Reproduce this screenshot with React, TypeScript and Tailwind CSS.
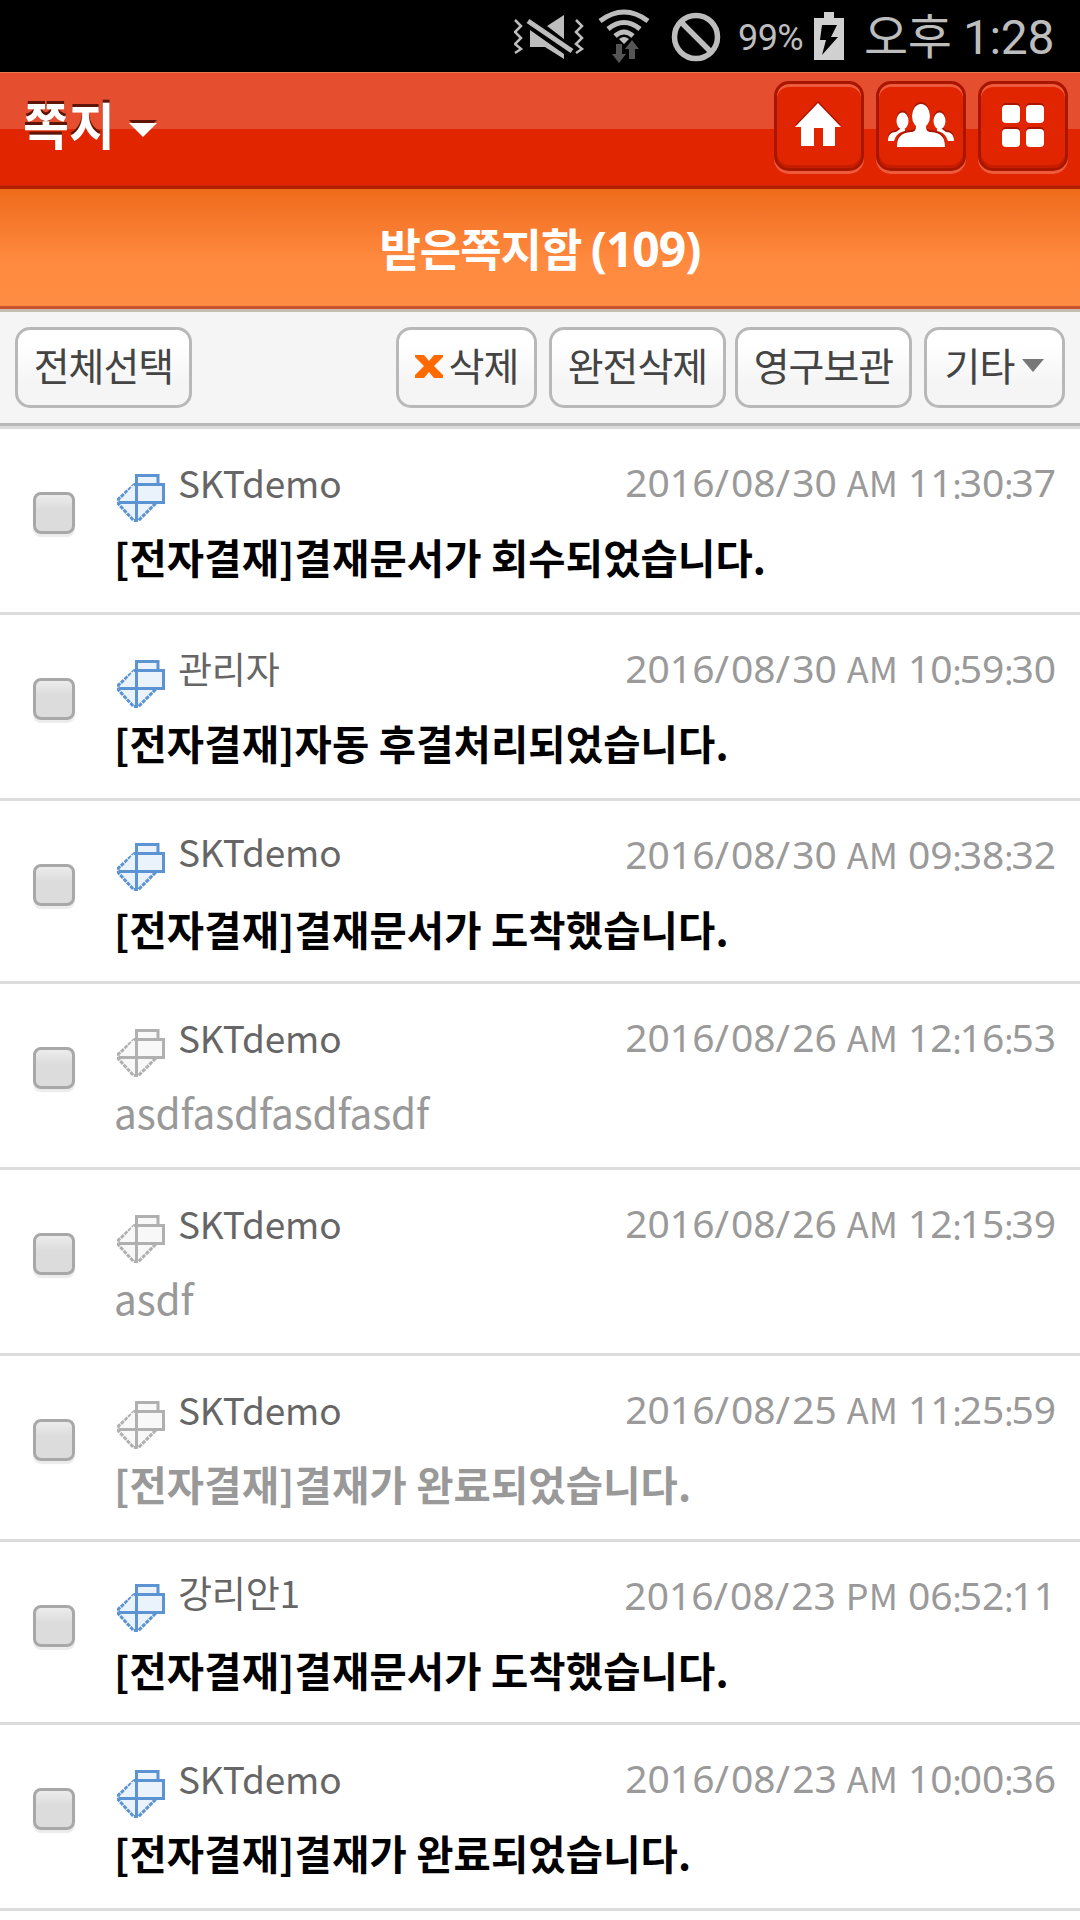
import React from 'react';

const messages = [
  { id: 1, from: 'SKTdemo', date: '2016/08/30', half: 'AM', time: '11:30:37', text: '[전자결재]결재문서가 회수되었습니다.', unread: true },
  { id: 2, from: '관리자', date: '2016/08/30', half: 'AM', time: '10:59:30', text: '[전자결재]자동 후결처리되었습니다.', unread: true },
  { id: 3, from: 'SKTdemo', date: '2016/08/30', half: 'AM', time: '09:38:32', text: '[전자결재]결재문서가 도착했습니다.', unread: true, short: true },
  { id: 4, from: 'SKTdemo', date: '2016/08/26', half: 'AM', time: '12:16:53', text: 'asdfasdfasdfasdf' },
  { id: 5, from: 'SKTdemo', date: '2016/08/26', half: 'AM', time: '12:15:39', text: 'asdf' },
  { id: 6, from: 'SKTdemo', date: '2016/08/25', half: 'AM', time: '11:25:59', text: '[전자결재]결재가 완료되었습니다.' },
  { id: 7, from: '강리안1', date: '2016/08/23', half: 'PM', time: '06:52:11', text: '[전자결재]결재문서가 도착했습니다.', unread: true, short: true },
  { id: 8, from: 'SKTdemo', date: '2016/08/23', half: 'AM', time: '10:00:36', text: '[전자결재]결재가 완료되었습니다.', unread: true },
];

function StatusBar() {
  return (
    <div className="h-[72px] bg-black flex items-center text-[#bdbdbd]">
      <svg className="ml-[514px] shrink-0" width="212" height="72" viewBox="514 0 212 72" fill="none">
        <g fill="#bdbdbd">
          <path d="M547 26 L564 15 V39z" />
          <path d="M530 30 L564 54 V59 L545 47 H530z" />
        </g>
        <path d="M528 21 L572 51" stroke="#bdbdbd" strokeWidth="5" />
        <path d="M515 20l6 6-6 6 6 6-6 6 6 5-6 4M576 20l6 6-6 6 6 6-6 6 6 5-6 4" stroke="#bdbdbd" strokeWidth="2.5" />
        <path d="M600 21 Q624 3 648 21M608 29 Q624 16 640 29M615 36 Q624 28 633 36" stroke="#bdbdbd" strokeWidth="5" />
        <path d="M619 39 Q624 35 629 39 L624 44z" fill="#bdbdbd" />
        <path d="M616 44h6v10h4l-7 9-7-9h4zM629 59v-10h-4l7-9 7 9h-4v10z" fill="#555" />
        <circle cx="696" cy="37" r="21.5" stroke="#bdbdbd" strokeWidth="5.5" />
        <path d="M681 22 L711 52" stroke="#bdbdbd" strokeWidth="5.5" />
      </svg>
      <span className="ml-3 mt-[4px] w-[67px] font-['Roboto'] text-[36px] tracking-[-0.6px] whitespace-nowrap">99%</span>
      <svg className="ml-2 shrink-0" width="32" height="48" viewBox="0 0 32 48">
        <path d="M11 0h10v6h10v42H1V6h10z" fill="#d0d0d0" />
        <path d="M9 13h15l-6 12h7L9 43l4-15H7z" fill="#000" />
      </svg>
      <span className="ml-[19px] mt-[3px] font-['Roboto','Noto_Sans_CJK_KR',sans-serif] text-[48px] leading-[60px] tracking-[-0.4px] whitespace-nowrap">오후 1:28</span>
    </div>
  );
}

function HeaderButton({ children }: { children: React.ReactNode }) {
  return (
    <button className="w-[90px] h-[90px] rounded-[15px] border-[3px] border-[#a81600] bg-[#e02500] shadow-[0_3px_0_#ee5a3c,inset_0_3px_0_#ee5a3c,inset_0_-3px_0_#c41d00] flex items-center justify-center">
      {children}
    </button>
  );
}

function Header() {
  return (
    <header className="h-[117px] flex items-start justify-between pl-[23px] pr-3 pt-[9px] bg-[linear-gradient(#e87a4c_0_1px,#e64e30_1px_57px,#e02500_57px_113px,#b32000_114px_117px)]">
      <div className="flex items-center mt-[7px] [filter:drop-shadow(0_-3px_0_#5c1508)]">
        <h1 className="text-white font-bold text-[50px] leading-[70px] font-['Noto_Sans_CJK_KR',sans-serif]">쪽지</h1>
        <svg className="ml-[14px] mt-[14px]" width="28" height="14" viewBox="0 0 28 14">
          <path d="M0 0h28L14 14z" fill="#fff" />
        </svg>
      </div>
      <div className="flex gap-3">
        <HeaderButton>
          <svg className="-mt-[2px] -ml-[3px] drop-shadow-[0_-2px_0_#a81600]" width="46" height="44" viewBox="0 0 46 44">
            <path d="M23 0 L46 24 H40 V43 H28 V25 H19 V43 H6 V24 H0z" fill="#fff" />
          </svg>
        </HeaderButton>
        <HeaderButton>
          <svg className="drop-shadow-[0_-2px_0_#a81600]" width="66" height="44" viewBox="0 0 66 44" fill="#fff">
            <ellipse cx="14.5" cy="17" rx="6" ry="8.5" />
            <ellipse cx="51.5" cy="17" rx="6" ry="8.5" />
            <path d="M0 37c0-6 3-9 8-9l4-3h5v2c-6 1-9 4-11 10zM66 37c0-6-3-9-8-9l-4-3h-5v2c6 1 9 4 11 10z" />
            <ellipse cx="33" cy="12" rx="9" ry="12" />
            <path d="M9 43c0-10 4-14 14-15 4 0 5-2 5-7h10c0 5 1 7 5 7 10 1 14 5 14 15z" />
          </svg>
        </HeaderButton>
        <HeaderButton>
          <div className="grid grid-cols-2 gap-[6px]">
            <i className="w-[18px] h-[18px] rounded bg-white shadow-[0_-2px_0_#a81600]" />
            <i className="w-[18px] h-[18px] rounded bg-white shadow-[0_-2px_0_#a81600]" />
            <i className="w-[18px] h-[18px] rounded bg-white shadow-[0_-2px_0_#a81600]" />
            <i className="w-[18px] h-[18px] rounded bg-white shadow-[0_-2px_0_#a81600]" />
          </div>
        </HeaderButton>
      </div>
    </header>
  );
}

function ToolButton({ wide, children }: { wide?: boolean; children: React.ReactNode }) {
  return (
    <button
      className={`${wide ? 'w-[177px]' : 'w-[141px]'} h-[81px] pb-[7px] rounded-[15px] border-[3px] border-[#b8b8b8] bg-linear-to-b from-white from-20% to-[#f5f5f5] to-70% flex items-center justify-center text-[#444] text-[39px] tracking-[-1px] whitespace-nowrap`}
    >
      {children}
    </button>
  );
}

function Toolbar() {
  return (
    <div className="h-[117px] mb-[3px] flex items-start pt-[15px] px-[15px] bg-[#f5f5f5] border-t-[3px] border-t-[#c5bdae] border-b-[3px] border-b-[#b8b8b8] shadow-[0_3px_0_#dcdcdc]">
      <ToolButton wide>전체선택</ToolButton>
      <div className="flex ml-auto">
        <ToolButton>
          <svg className="mr-[6px] mt-[5px]" width="28" height="23" viewBox="0 0 28 23">
            <path d="M0 0h9l5 6 5-6h9v2l-9 9 9 9v3h-9l-5-6-5 6H0v-3l9-9-9-9z" fill="#ff6a00" />
          </svg>
          삭제
        </ToolButton>
        <div className="ml-3"><ToolButton wide>완전삭제</ToolButton></div>
        <div className="ml-[9px]"><ToolButton wide>영구보관</ToolButton></div>
        <div className="ml-3">
          <ToolButton>
            기타
            <svg className="ml-2 mt-[2px]" width="22" height="13" viewBox="0 0 22 13">
              <path d="M0 0h22L11 13z" fill="#777" />
            </svg>
          </ToolButton>
        </div>
      </div>
    </div>
  );
}

function NoteIcon({ unread }: { unread?: boolean }) {
  const stroke = unread ? '#5b93d3' : '#b0b0b0';
  const fill = unread ? '#eaf3fb' : '#f8f8f8';
  return (
    <svg className="shrink-0" width="48" height="48" viewBox="0 0 48 48" fill={fill} stroke={stroke} strokeWidth="3">
      <path d="M18 10 1.5 25v5l15 16.5h5L39 29" strokeDasharray="4 1" />
      <path d="M19.5 10V1.5h21.500V10" />
      <path d="M17 10.500H46.500V28.500H1.500M19.500 10v37" />
    </svg>
  );
}

// the date face sets slashes wide and colons narrow
function Stamp({ value }: { value: string }) {
  return (
    <span>
      {value.split(/([/:])/).map((part, i) => {
        if (part === '/') return <span key={i} className="tracking-[2px]">/</span>;
        if (part === ':') return <span key={i} className="relative top-[2px] text-[34px] tracking-[-2px]">:</span>;
        return part;
      })}
    </span>
  );
}

function MessageRow({ message }: { message: (typeof messages)[number] }) {
  const hangul = message.text.startsWith('[');
  return (
    <li className={`${message.short ? 'h-[183px]' : 'h-[186px]'} flex border-b-[3px] border-[#dcdcdc] pl-[33px] pr-6`}>
      <span className="mt-[63px] w-[42px] h-[42px] shrink-0 rounded-[8px] border-[3px] border-[#a8a8a8] bg-linear-to-b from-[#ececec] to-[#dcdcdc] to-40% shadow-[0_3px_1px_#ececec]" />
      <div className="ml-[42px] flex-1">
        <div className="flex h-[93px]">
          <div className={`flex ${message.short ? 'pt-[42px]' : 'pt-[45px]'}`}>
            <NoteIcon unread={message.unread} />
            <span className="ml-[13px] -mt-[19px] text-[37px] leading-[54px] tracking-[-0.2px] text-[#666] whitespace-nowrap">{message.from}</span>
          </div>
          <span className="ml-auto mt-[26px] flex text-[39px] leading-[54px] text-[#9a9a9a] font-['Noto_Sans'] whitespace-pre">
            <Stamp value={message.date} />
            <span className="relative -top-px text-[36px] font-['Noto_Sans_CJK_KR'] ml-[10px] mr-[10px]">{message.half}</span>
            <Stamp value={message.time} />
          </span>
        </div>
        <p className={`${hangul ? 'font-bold tracking-[0.15px]' : 'tracking-[-0.15px]'} ${message.unread ? 'text-black' : 'text-[#999]'} text-[40.5px] leading-[60px] -ml-[3px] mt-[5px] whitespace-nowrap`}>
          {message.text}
        </p>
      </div>
    </li>
  );
}

export default function App() {
  return (
    <div className="w-[1080px] h-[1920px] overflow-hidden bg-white font-['Noto_Sans_CJK_KR',sans-serif]">
      <StatusBar />
      <Header />
      <div className="h-[120px] flex items-center justify-center bg-[linear-gradient(#ef6c1a,#f27022_10%,#ff8a40_60%,#ff8c42_97%,#c8502a_98%)] text-white font-bold text-[45px] tracking-[-1px]">
        <h2 className="whitespace-pre">받은쪽지함 <span className="font-['Noto_Sans'] text-[48px]">(109)</span></h2>
      </div>
      <Toolbar />
      <ul>
        {messages.map((message) => (
          <MessageRow key={message.id} message={message} />
        ))}
      </ul>
    </div>
  );
}
